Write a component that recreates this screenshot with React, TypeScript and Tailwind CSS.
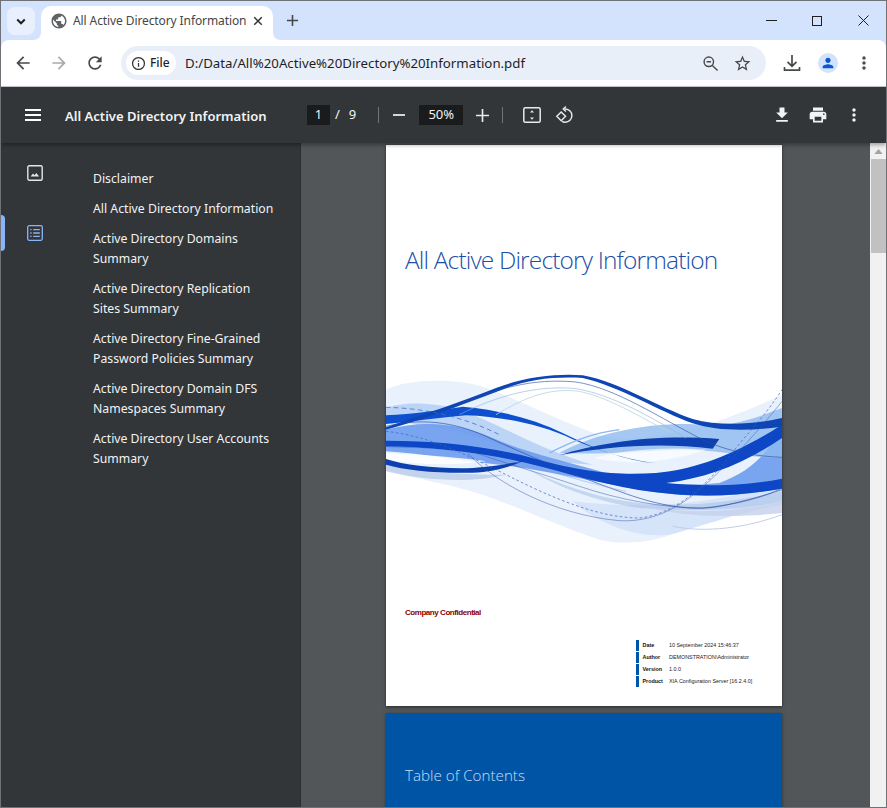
import React from "react";

const I = ({ d, c = "w-5 h-5", vb = "0 0 24 24", fill = "currentColor" }: { d: string; c?: string; vb?: string; fill?: string }) => (
  <svg viewBox={vb} className={c} fill={fill}><path d={d} /></svg>
);

const MORE = "M12 8c1.1 0 2-.9 2-2s-.9-2-2-2-2 .9-2 2 .9 2 2 2zm0 2c-1.1 0-2 .9-2 2s.9 2 2 2 2-.9 2-2-.9-2-2-2zm0 6c-1.1 0-2 .9-2 2s.9 2 2 2 2-.9 2-2-.9-2-2-2z";

const outline = [
  ["Disclaimer"],
  ["All Active Directory Information"],
  ["Active Directory Domains", "Summary"],
  ["Active Directory Replication", "Sites Summary"],
  ["Active Directory Fine-Grained", "Password Policies Summary"],
  ["Active Directory Domain DFS", "Namespaces Summary"],
  ["Active Directory User Accounts", "Summary"],
];

const meta = [
  ["Date", "10 September 2024 15:46:37"],
  ["Author", "DEMONSTRATION\\Administrator"],
  ["Version", "1.0.0"],
  ["Product", "XIA Configuration Server [16.2.4.0]"],
];

function Wave() {
  return (
    <svg viewBox="0 0 1188 600" className="w-[396px] h-[200px] block" fill="none">
      <defs>
        <filter id="soft" x="-2%" y="-2%" width="104%" height="104%"><feGaussianBlur stdDeviation="1.2" /></filter>
      </defs>
      <g filter="url(#soft)">
        <path d="M0,95 C60,62 220,58 300,90 C400,125 520,190 650,235 C800,262 1000,200 1188,110 L1188,440 C1050,470 950,480 900,510 C830,550 720,565 640,545 C500,500 350,420 200,385 C120,365 60,355 0,335 Z" fill="#e8f1fc" />
        <path d="M560,430 C640,500 760,545 860,528 C950,505 1050,465 1188,440 L1188,380 C1000,430 800,460 560,430 Z" fill="#d5e4f8" />
        <path d="M0,150 C60,130 160,130 260,170 C380,220 480,280 620,320 L480,310 C340,260 200,200 0,190 Z" fill="#a9c8f4" opacity="0.7" />
        <path d="M0,215 C110,185 220,195 320,240 C420,285 540,310 660,345 C760,375 860,390 1000,375 C1080,345 1140,300 1188,205 L1188,390 C1050,420 900,420 760,395 C620,370 470,335 340,320 C220,310 100,285 0,280 Z" fill="#6d9bee" opacity="0.9" />
        <path d="M520,285 C640,220 800,190 960,200 C1060,205 1130,170 1188,150 L1188,300 C1080,300 980,270 860,275 C760,280 640,290 520,285 Z" fill="#8fbaf0" opacity="0.8" />
        <path d="M0,285 C100,290 200,295 300,310 C200,325 100,320 0,305 Z" fill="#ffffff" opacity="0.85" />
        <path d="M620,300 C720,275 820,265 960,275 C860,310 740,325 620,300 Z" fill="#ffffff" opacity="0.65" />
        <path d="M0,340 C120,370 260,375 360,350 C240,350 120,345 0,320 Z" fill="#b4c6e6" opacity="0.7" />
        <path d="M420,330 C560,400 700,440 860,440 C980,440 1100,420 1188,400 L1188,430 C1060,460 900,460 760,450 C620,430 500,380 420,330 Z" fill="#a5bfe6" opacity="0.55" />
        <path d="M720,430 C860,470 1020,470 1188,430 L1188,465 C1040,480 860,480 720,430 Z" fill="#c5cfec" opacity="0.8" />

        <path d="M0,172 C80,168 170,155 230,146 C340,155 450,185 530,225 C620,270 720,310 810,316 C740,308 650,284 560,244 C470,200 350,176 240,172 C160,178 80,192 0,198 Z" fill="#0a50cf" />
        <path d="M0,208 C110,170 230,130 330,90 C420,55 520,46 590,52 C700,72 820,150 920,183 C1000,205 1100,200 1188,180 L1188,206 C1100,218 1000,222 920,196 C820,160 700,85 590,60 C500,55 420,65 340,98 C230,140 110,185 0,215 Z" fill="#0c44b4" />
        <path d="M520,292 C640,255 800,228 1000,243 L980,272 C820,252 660,265 520,292 Z" fill="#0b3fb0" />
        <path d="M0,248 C150,248 300,262 450,303 C600,345 700,352 810,345 C920,335 1040,295 1188,200 L1188,240 C1070,320 960,360 840,375 C980,388 1100,380 1188,362 L1188,392 C1080,412 960,417 860,408 C720,398 600,362 470,327 C320,287 160,267 0,267 Z" fill="#0846c6" />
        <path d="M0,303 C60,323 160,333 260,330 C320,326 370,318 420,306 C370,328 320,342 260,344 C160,347 60,337 0,320 Z" fill="#0a3fae" />

        <path d="M0,205 C100,180 200,190 300,235 C420,290 560,350 700,400 C820,445 920,460 1000,445 C1080,430 1140,410 1188,395" stroke="#2a4da6" strokeWidth="2.5" opacity="0.8" />
        <path d="M240,275 C340,310 460,345 580,385 C700,425 830,450 950,450 C1050,440 1130,420 1188,390" stroke="#2a4da6" strokeWidth="2" opacity="0.7" />
        <path d="M240,280 C320,370 500,470 700,488 C830,495 920,420 1000,340 C1080,260 1140,190 1188,130" stroke="#3c5cb0" strokeWidth="2" opacity="0.75" />
        <path d="M0,220 C140,235 260,300 380,360 C500,420 640,480 760,480 C860,470 960,390 1050,270 C1090,220 1140,170 1188,95" stroke="#3f66c0" strokeWidth="3" strokeDasharray="8 7" opacity="0.7" />
        <path d="M0,148 C100,150 220,170 340,230" stroke="#3f66c0" strokeWidth="3" strokeDasharray="14 10" opacity="0.75" />
        <path d="M200,150 C330,90 440,60 570,72 C690,90 820,180 960,250 C1040,285 1120,295 1188,298" stroke="#2c4da0" strokeWidth="2.5" opacity="0.75" />
        <path d="M220,170 C330,115 450,80 570,92 C680,110 800,180 900,240" stroke="#8fb0dc" strokeWidth="3" opacity="0.6" />
        <path d="M330,170 C430,110 500,90 580,100 C680,120 780,190 850,220" stroke="#b9d4d8" strokeWidth="3" opacity="0.8" />
        <path d="M0,265 C120,268 240,280 360,305 C480,335 600,375 720,400" stroke="#7d9ed8" strokeWidth="2" opacity="0.7" />
        <path d="M860,505 C960,525 1080,510 1188,470" stroke="#c2cdea" strokeWidth="3" />
        <path d="M490,285 C560,250 620,225 700,215" stroke="#7fb0ee" strokeWidth="4" opacity="0.9" />
      </g>
    </svg>
  );
}

export default function App() {
  return (
    <div className="w-[887px] h-[808px] overflow-hidden flex flex-col border border-[#6f7277] bg-[#d3e3fd] font-['Noto_Sans',sans-serif] box-border">
      {/* Tab strip */}
      <div className="h-[39px] shrink-0 flex items-end pl-[6px] text-[#45474a]">
        <div className="w-[28px] h-[28px] mb-[5px] rounded-lg bg-[#e9f0fd] flex items-center justify-center text-[#1f1f1f]">
          <svg viewBox="0 0 24 24" className="w-[18px] h-[18px]" fill="none" stroke="currentColor" strokeWidth="2.6"><path d="M7 10l5 5 5-5" /></svg>
        </div>
        <div className="relative ml-[6px] w-[232px] h-[34px] pb-[5px] bg-white rounded-t-[10px] flex items-center pl-[9px] pr-[10px]">
          <svg viewBox="0 0 8 8" className="absolute bottom-0 -left-[8px] w-[8px] h-[8px]"><path d="M8 0 V8 H0 C5 8 8 5 8 0 Z" fill="#fff" /></svg>
          <svg viewBox="0 0 8 8" className="absolute bottom-0 -right-[8px] w-[8px] h-[8px]"><path d="M0 0 V8 H8 C3 8 0 5 0 0 Z" fill="#fff" /></svg>
          <I c="w-[18px] h-[18px] shrink-0 text-[#5f6368]" d="M12 2C6.48 2 2 6.48 2 12s4.48 10 10 10 10-4.48 10-10S17.52 2 12 2zm-1 17.93c-3.95-.49-7-3.85-7-7.93 0-.62.08-1.21.21-1.79L9 15v1c0 1.1.9 2 2 2v1.93zm6.9-2.54c-.26-.81-1-1.39-1.9-1.39h-1v-3c0-.55-.45-1-1-1H8v-2h2c.55 0 1-.45 1-1V7h2c1.1 0 2-.9 2-2v-.41c2.93 1.19 5 4.06 5 7.41 0 2.08-.8 3.97-2.1 5.39z" />
          <span className="ml-[5px] flex-1 text-[12px] tracking-[-0.1px] text-[#44474a] whitespace-nowrap">All Active Directory Information</span>
          <svg viewBox="0 0 12 12" className="w-[10px] h-[10px] text-[#303134]" fill="none" stroke="currentColor" strokeWidth="1.7"><path d="M1.5 1.5l9 9M10.5 1.5l-9 9" /></svg>
        </div>
        <svg viewBox="0 0 14 14" className="w-[13px] h-[13px] ml-[13px] mb-[13px] text-[#45474a]" fill="none" stroke="currentColor" strokeWidth="1.7"><path d="M7 1v12M1 7h12" /></svg>
        <div className="flex-1" />
        <div className="flex items-center h-[39px] text-[#1f1f1f]">
          <div className="w-[46px] flex justify-center"><div className="w-[11px] h-[1px] bg-[#1f1f1f]" /></div>
          <div className="w-[46px] flex justify-center"><div className="w-[10px] h-[10px] border border-[#1f1f1f]" /></div>
          <div className="w-[46px] flex justify-center">
            <svg viewBox="0 0 11 11" className="w-[11px] h-[11px]" fill="none" stroke="currentColor" strokeWidth="1"><path d="M.5.5l10 10M10.5.5l-10 10" /></svg>
          </div>
        </div>
      </div>

      {/* Address bar */}
      <div className="h-[47px] shrink-0 bg-white rounded-t-lg border-b border-[#c7c9cc] flex items-center pl-[12px] pr-[12px] text-[#474a4d]">
        <I c="w-[20px] h-[20px]" d="M20 11H7.83l5.59-5.59L12 4l-8 8 8 8 1.41-1.41L7.83 13H20v-2z" />
        <I c="w-[20px] h-[20px] ml-[16px] text-[#a9abae]" d="M4 13h12.17l-5.59 5.59L12 20l8-8-8-8-1.41 1.41L16.17 11H4v2z" />
        <I c="w-[20px] h-[20px] ml-[16px]" d="M17.65 6.35C16.2 4.9 14.21 4 12 4c-4.42 0-7.99 3.58-7.99 8s3.57 8 7.99 8c3.73 0 6.84-2.55 7.73-6h-2.08c-.82 2.33-3.04 4-5.65 4-3.31 0-6-2.69-6-6s2.69-6 6-6c1.66 0 3.14.69 4.22 1.78L13 11h7V4l-2.35 2.35z" />
        <div className="ml-[16px] w-[645px] h-[34px] rounded-full bg-[#e9eff9] flex items-center pl-[5px] pr-[14px]">
          <div className="w-[50px] h-[24px] rounded-full bg-white flex items-center pl-[5px]">
            <svg viewBox="0 0 24 24" className="w-[15px] h-[15px] text-[#303134]" fill="none" stroke="currentColor" strokeWidth="2"><circle cx="12" cy="12" r="9.5" /><path d="M12 11v6M12 7v2" /></svg>
            <span className="ml-[4px] text-[12px] font-medium text-[#1f1f1f]">File</span>
          </div>
          <span className="ml-[9px] pt-[1px] flex-1 text-[13.25px] text-[#1f1f1f] whitespace-nowrap">D:/Data/All%20Active%20Directory%20Information.pdf</span>
          <svg viewBox="0 0 18 18" className="w-[17px] h-[17px] text-[#474a4d]" fill="none" stroke="currentColor" strokeWidth="1.5"><circle cx="7.2" cy="7.2" r="5" /><path d="M4.8 7.2h4.8M11 11l5.5 5.5" /></svg>
          <I c="w-[19px] h-[19px] ml-[14px]" d="M22 9.24l-7.19-.62L12 2 9.19 8.63 2 9.24l5.46 4.73L5.82 21 12 17.27 18.18 21l-1.63-7.03L22 9.24zM12 15.4l-3.76 2.27 1-4.28-3.32-2.88 4.38-.38L12 6.1l1.71 4.04 4.38.38-3.32 2.88 1 4.28L12 15.4z" />
        </div>
        <svg viewBox="0 0 20 20" className="w-[20px] h-[20px] ml-[16px]" fill="none" stroke="currentColor" strokeWidth="1.7"><path d="M10 2v11M5.5 8.8L10 13.2l4.5-4.4M2.5 14v3.2h15V14" /></svg>
        <div className="ml-[16px] w-[20px] h-[20px] rounded-full bg-[#d3e3fd] flex items-center justify-center">
          <I c="w-[16px] h-[16px] text-[#0b57d0]" d="M12 12c2.21 0 4-1.79 4-4s-1.79-4-4-4-4 1.79-4 4 1.79 4 4 4zm0 2c-2.67 0-8 1.34-8 4v2h16v-2c0-2.66-5.33-4-8-4z" />
        </div>
        <I c="w-[20px] h-[20px] ml-[16px]" d={MORE} />
      </div>

      {/* PDF toolbar */}
      <div className="relative z-10 h-[56px] shrink-0 bg-[#323639] shadow-[0_2px_4px_rgba(0,0,0,0.35)] flex items-center text-[#f1f3f4]">
        <div className="w-[64px] shrink-0 pl-[24px] flex flex-col gap-[3px]">
          <div className="w-[16px] h-[2px] bg-white" /><div className="w-[16px] h-[2px] bg-white" /><div className="w-[16px] h-[2px] bg-white" />
        </div>
        <div className="w-[242px] shrink-0 pt-[3px] text-[13.05px] font-semibold whitespace-nowrap">All Active Directory Information</div>
        <div className="w-[23px] h-[20px] bg-[#191b1c] text-[13px] flex items-center justify-center">1</div>
        <span className="ml-[5px] text-[13px]">/</span>
        <span className="ml-[9px] text-[13px]">9</span>
        <div className="ml-[22px] w-[1px] h-[16px] bg-[#70757a]" />
        <div className="ml-[14px] w-[12px] h-[2px] bg-[#d4d6d8]" />
        <div className="ml-[14px] w-[44px] h-[20px] bg-[#191b1c] text-[13px] flex items-center justify-center">50%</div>
        <svg viewBox="0 0 14 14" className="ml-[13px] w-[13px] h-[13px] text-[#e8eaed]" fill="none" stroke="currentColor" strokeWidth="1.8"><path d="M7 0v14M0 7h14" /></svg>
        <div className="ml-[13px] w-[1px] h-[16px] bg-[#70757a]" />
        <svg viewBox="0 0 18 16" className="ml-[20px] w-[18px] h-[16px] text-[#e8eaed]" fill="none" stroke="currentColor" strokeWidth="1.5"><rect x=".8" y=".8" width="16.4" height="14.4" rx="1.5" /><path d="M9 3.2l-2 2.4h4zM9 12.8l-2-2.4h4z" fill="currentColor" stroke="none" /></svg>
        <svg viewBox="0 0 20 20" className="ml-[14px] w-[19px] h-[19px] text-[#e8eaed]" fill="none" stroke="currentColor" strokeWidth="1.5"><path d="M10 3.2h1.2c3.6.2 6.6 3.1 6.6 6.9 0 3.9-3.1 7-7 7-1.3 0-2.4-.3-3.4-1" /><path d="M11.5 .6L8.7 3.2l2.8 2.7" /><path d="M6.5 6.2l4.6 4.6-4.6 4.6-4.6-4.6z" /></svg>
        <div className="flex-1" />
        <I c="w-[20px] h-[20px] mr-[16px]" d="M19 9h-4V3H9v6H5l7 7 7-7zM5 18v2h14v-2H5z" />
        <I c="w-[20px] h-[20px] mr-[16px]" d="M19 8H5c-1.66 0-3 1.34-3 3v6h4v4h12v-4h4v-6c0-1.66-1.34-3-3-3zm-3 11H8v-5h8v5zm3-7c-.55 0-1-.45-1-1s.45-1 1-1 1 .45 1 1-.45 1-1 1zm-1-9H6v4h12V3z" />
        <I c="w-[20px] h-[20px] mr-[22px]" d={MORE} />
      </div>

      {/* Body */}
      <div className="flex-1 min-h-0 flex">
        <aside className="w-[300px] shrink-0 bg-[#323639] flex text-[#f1f3f4] border-r border-[#2b2e30]">
          <div className="w-[92px] shrink-0 flex">
            <div className="w-[4px] h-[36px] mt-[72px] bg-[#8ab4f8] rounded-r" />
            <div className="flex-1 flex flex-col items-center pr-[28px] pt-[22px] gap-[44px]">
              <svg viewBox="0 0 16 16" className="w-[16px] h-[16px] text-[#e3e5e7]" fill="none" stroke="currentColor" strokeWidth="1.4"><rect x=".8" y=".8" width="14.4" height="14.4" rx="1.5" /><path d="M3.6 11.6l2.4-3 1.6 1.6 1.6-2.2 3 3.6z" fill="currentColor" stroke="none" /></svg>
              <svg viewBox="0 0 16 16" className="w-[16px] h-[16px] text-[#8ab4f8]" fill="none" stroke="currentColor" strokeWidth="1.3"><rect x=".7" y=".7" width="14.6" height="14.6" rx="1.5" /><path d="M3.2 4.6h1.4M6.2 4.6h6.6M3.2 8h1.4M6.2 8h6.6M3.2 11.4h1.4M6.2 11.4h6.6" /></svg>
            </div>
          </div>
          <div className="pt-[21px] text-[12.25px] leading-[20px]">
            {outline.map((lines) => (
              <div key={lines[0]} className="py-[5px] whitespace-nowrap">
                {lines.map((l) => <div key={l}>{l}</div>)}
              </div>
            ))}
          </div>
        </aside>

        <main className="flex-1 min-w-0 bg-[#525659] flex flex-col items-center gap-[7px] pt-[2px] pr-[3px] overflow-hidden">
          <div className="w-[396px] h-[561px] shrink-0 bg-white shadow-[0_1px_3px_rgba(0,0,0,0.5)] flex flex-col">
            <div className="pt-[97px] pl-[19px] text-[24.5px] leading-[36px] font-light tracking-[-0.85px] text-[#1a4fa8] font-['Open_Sans',sans-serif] whitespace-nowrap">All Active Directory Information</div>
            <div className="mt-[80px]"><Wave /></div>
            <div className="mt-[49px] pl-[19px] text-[8px] leading-[12px] font-bold tracking-[-0.45px] text-[#8b0000] font-['Liberation_Sans',sans-serif]">Company Confidential</div>
            <div className="mt-[21px] ml-[250px] flex flex-col gap-[1px] font-['Liberation_Sans',sans-serif] text-[5.4px] text-[#222]">
              {meta.map(([k, v]) => (
                <div key={k} className="h-[11px] flex items-center border-l-[3.5px] border-[#0054a6]">
                  <span className="w-[30px] pl-[3.5px] font-bold text-[#111]">{k}</span>
                  <span>{v}</span>
                </div>
              ))}
            </div>
          </div>
          <div className="w-[396px] h-[120px] shrink-0 bg-[#0054a6] shadow-[0_1px_3px_rgba(0,0,0,0.5)] pt-[51px] pl-[19px] text-[15.2px] leading-[22px] font-light text-[#c5def5] font-['Open_Sans',sans-serif]">Table of Contents</div>
        </main>

        <div className="w-[16px] shrink-0 bg-[#f1f1f1] flex flex-col items-center">
          <svg viewBox="0 0 10 6" className="w-[9px] h-[5px] mt-[6px] text-[#a3a3a3]" fill="currentColor"><path d="M5 0l5 6H0z" /></svg>
          <div className="w-[15px] h-[94px] mt-[5px] bg-[#c1c1c1]" />
        </div>
      </div>
    </div>
  );
}
